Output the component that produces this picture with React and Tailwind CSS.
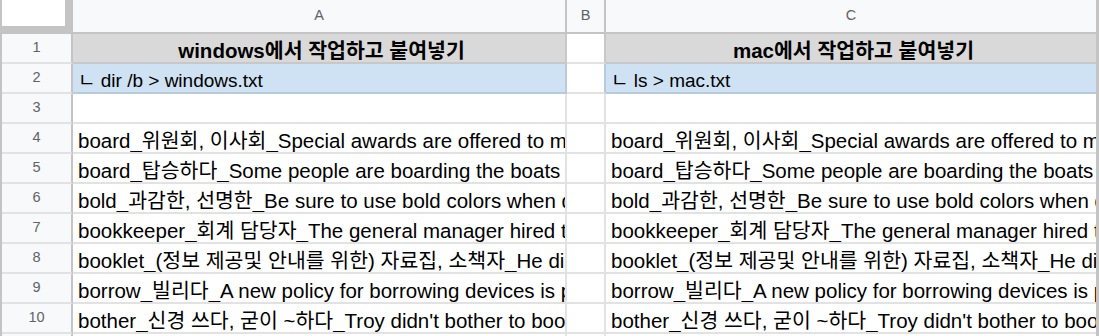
import React from "react";

// 스프레드시트 화면 재현
const FONT = { fontFamily: '"Liberation Sans", Arial, "Noto Sans CJK KR", sans-serif' };

const rows = [
  "board_위원회, 이사회_Special awards are offered to members of the board",
  "board_탑승하다_Some people are boarding the boats",
  "bold_과감한, 선명한_Be sure to use bold colors when designing the poster",
  "bookkeeper_회계 담당자_The general manager hired the new bookkeeper",
  "booklet_(정보 제공및 안내를 위한) 자료집, 소책자_He distributed the booklets",
  "borrow_빌리다_A new policy for borrowing devices is posted",
  "bother_신경 쓰다, 굳이 ~하다_Troy didn't bother to book a table",
];

function RowHead({ n, className = "" }) {
  return (
    <div className={`w-[71px] shrink-0 bg-[#f8f9fa] border-r-2 border-r-[#c4c4c4] flex items-center justify-center text-[14.5px] text-[#5f6368] ${className}`}>
      {n}
    </div>
  );
}

function Cell({ w, children, className = "" }) {
  return (
    <div className={`${w} shrink-0 overflow-hidden whitespace-nowrap flex items-end pl-[5px] leading-[22px] text-black ${className}`}>
      {children}
    </div>
  );
}

export default function App() {
  return (
    <div className="w-[1099px] h-[336px] overflow-hidden bg-white flex" style={FONT}>
      <div className="w-[1096px] shrink-0 border-l-2 border-l-[#c4c4c4]">
        {/* 열 머리글 */}
        <div className="flex h-[34px] border-b-2 border-b-[#c4c4c4]">
          <div className="w-[69px] shrink-0 bg-white border-r-[6px] border-r-[#c4c4c4] border-b-[6px] border-b-[#c4c4c4]" />
          <div className="w-[2px] shrink-0 bg-[#c4c4c4]" />
          <div className="w-[494px] shrink-0 bg-[#f8f9fa] border-r-2 border-r-[#c4c4c4] flex items-center justify-center text-[14.5px] text-[#5f6368]">A</div>
          <div className="w-[39px] shrink-0 bg-[#f8f9fa] border-r-2 border-r-[#c4c4c4] flex items-center justify-center text-[14.5px] text-[#5f6368]">B</div>
          <div className="w-[490px] shrink-0 bg-[#f8f9fa] flex items-center justify-center text-[14.5px] text-[#5f6368]">C</div>
        </div>

        {/* 1행: 제목 */}
        <div className="flex h-[30px]">
          <RowHead n={1} className="border-b-2 border-b-[#e2e2e2]" />
          <Cell w="w-[494px]" className="justify-center pl-0 bg-[#d9d9d9] font-bold text-[20.5px] border-r-2 border-r-[#c8c8c8] border-b-2 border-b-[#c8c8c8]">windows에서 작업하고 붙여넣기</Cell>
          <div className="w-[39px] shrink-0 bg-white border-r-2 border-r-[#c8c8c8] border-b-2 border-b-[#e2e2e2]" />
          <Cell w="w-[490px]" className="justify-center pl-0 bg-[#d9d9d9] font-bold text-[20.5px] border-b-2 border-b-[#c8c8c8]">mac에서 작업하고 붙여넣기</Cell>
        </div>

        {/* 2행: 명령 */}
        <div className="flex h-[30px]">
          <RowHead n={2} className="border-b-2 border-b-[#e2e2e2]" />
          <Cell w="w-[494px]" className="text-[19px] bg-[#cfe2f3] border-r-2 border-r-[#b8cadb] border-b-2 border-b-[#b8cadb]">ㄴ dir /b &gt; windows.txt</Cell>
          <div className="w-[39px] shrink-0 bg-white border-r-2 border-r-[#b8cadb] border-b-2 border-b-[#e2e2e2]" />
          <Cell w="w-[490px]" className="text-[19px] bg-[#cfe2f3] border-b-2 border-b-[#b8cadb]">ㄴ ls &gt; mac.txt</Cell>
        </div>

        {/* 3행: 빈 줄 */}
        <div className="flex h-[30px]">
          <RowHead n={3} className="border-b-2 border-b-[#e2e2e2]" />
          <div className="w-[494px] shrink-0 border-r-2 border-r-[#e2e2e2] border-b-2 border-b-[#e2e2e2]" />
          <div className="w-[39px] shrink-0 border-r-2 border-r-[#e2e2e2] border-b-2 border-b-[#e2e2e2]" />
          <div className="w-[490px] shrink-0 border-b-2 border-b-[#e2e2e2]" />
        </div>

        {rows.map((t, i) => (
          <div key={i} className="flex h-[30px]">
            <RowHead n={i + 4} className="border-b-2 border-b-[#e2e2e2]" />
            <Cell w="w-[494px]" className="text-[20.5px] border-r-2 border-r-[#e2e2e2] border-b-2 border-b-[#e2e2e2]">{t}</Cell>
            <div className="w-[39px] shrink-0 border-r-2 border-r-[#e2e2e2] border-b-2 border-b-[#e2e2e2]" />
            <Cell w="w-[490px]" className="text-[20.5px] border-b-2 border-b-[#e2e2e2]">{t}</Cell>
          </div>
        ))}

        <div className="flex h-[30px]">
          <RowHead n={11} />
          <div className="w-[494px] shrink-0 border-r-2 border-r-[#e2e2e2]" />
          <div className="w-[39px] shrink-0 border-r-2 border-r-[#e2e2e2]" />
          <div className="w-[490px] shrink-0" />
        </div>
      </div>
      <div className="w-[3px] shrink-0 bg-[#c4c4c4]" />
    </div>
  );
}
